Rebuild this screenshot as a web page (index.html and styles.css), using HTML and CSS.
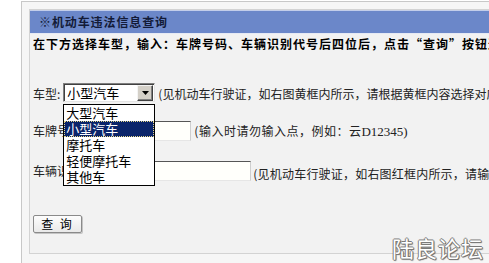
FILE: index.html
```html
<!DOCTYPE html>
<html lang="zh-CN">
<head>
<meta charset="utf-8">
<title>机动车违法信息查询</title>
<link rel="stylesheet" href="styles.css">
</head>
<body>
<div class="outer">
  <div class="panel">
    <div class="panel-title">※机动车违法信息查询</div>
    <p class="intro">在下方选择车型，输入：车牌号码、车辆识别代号后四位后，点击“查询”按钮进行查询。</p>
    <div class="form">
      <div class="row row-type">
        <span class="label">车型:</span>
        <div class="select">
          <span class="select-value">小型汽车</span>
          <span class="select-btn"><svg width="7" height="4" viewBox="0 0 7 4"><path d="M0 0H7L3.5 4Z" fill="#000"/></svg></span>
          <ul class="select-list">
            <li>大型汽车</li>
            <li class="active">小型汽车</li>
            <li>摩托车</li>
            <li>轻便摩托车</li>
            <li>其他车</li>
          </ul>
        </div>
        <span class="hint hint-type">(见机动车行驶证，如右图黄框内所示，请根据黄框内容选择对应车型)</span>
      </div>
      <div class="row row-plate">
        <span class="label">车牌号码:</span>
        <span class="text-input input-plate"></span>
        <span class="hint">(输入时请勿输入点，例如：云<span class="latin">D12345)</span></span>
      </div>
      <div class="row row-vin">
        <span class="label">车辆识别代号:</span>
        <span class="text-input input-vin"></span>
        <span class="hint hint-vin">(见机动车行驶证，如右图红框内所示，请输入车辆识别代号后四位)</span>
      </div>
    </div>
    <button class="submit" type="button">查 询</button>
  </div>
</div>
<div class="watermark">陆良论坛</div>
</body>
</html>
```

FILE: styles.css
```css
html, body {
  margin: 0;
  padding: 0;
}
body {
  width: 489px;
  height: 263px;
  overflow: hidden;
  position: relative;
  background: #ffffff;
  font-family: "Noto Sans CJK SC", "Liberation Sans", sans-serif;
  font-size: 12px;
  color: #222;
}
.outer {
  margin: 1px 0 0 21px;
  border-top: 1px solid #c8c8c8;
  border-left: 1px solid #c8c8c8;
  padding: 7px 0 0 7px;
  height: 254px;
  overflow: hidden;
  background: #f6f6f6;
}
.panel {
  width: 540px;
  border: 1px solid #d3d3d3;
  border-right: none;
  background: #f2f2f2;
  padding-bottom: 20px;
}
.panel-title {
  height: 22px;
  line-height: 22px;
  border-top: 1px solid #c2cdea;
  border-bottom: 1px solid #e6eaf4;
  background: #6b87c9;
  padding-left: 9px;
  font-weight: bold;
  color: #131b38;
  letter-spacing: 0.9px;
  white-space: nowrap;
}
.intro {
  margin: 0;
  padding-left: 3px;
  line-height: 20px;
  font-weight: bold;
  color: #000;
  letter-spacing: 1px;
  white-space: nowrap;
}
.form {
  margin-top: 29px;
  padding-left: 3px;
}
.row {
  display: flex;
  align-items: center;
  white-space: nowrap;
}
.row-type {
  height: 19px;
}
.row-plate {
  margin-top: 19px;
  height: 20px;
}
.row-vin {
  margin-top: 20px;
  height: 20px;
}
.label {
  margin-right: 3px;
  line-height: 16px;
  position: relative;
  top: 1px;
}
.row-plate .label, .row-vin .label {
  top: 0;
}
.select {
  position: relative;
  width: 92px;
  height: 19px;
  box-sizing: border-box;
  border: 1px solid;
  border-color: #7f7f7f #e4e4e4 #e4e4e4 #7f7f7f;
  box-shadow: inset 1px 1px 0 #404040;
  background: #fff;
  display: flex;
  align-items: center;
  flex: none;
}
.select-value {
  flex: 1;
  padding-left: 3px;
  font-size: 13px;
  line-height: 17px;
  color: #000;
}
.select-btn {
  width: 16px;
  height: 16px;
  margin-right: 1px;
  margin-top: 1px;
  box-sizing: border-box;
  background: #d4d0c8;
  border: 1px solid;
  border-color: #f4f4f4 #404040 #404040 #f4f4f4;
  box-shadow: inset -1px -1px 0 #808080;
  display: flex;
  align-items: center;
  justify-content: center;
}
.select-list {
  position: absolute;
  left: -1px;
  top: calc(100% + 3px);
  width: 92px;
  box-sizing: border-box;
  margin: 0;
  padding: 0;
  list-style: none;
  border: 1px solid #000;
  background: #fff;
  z-index: 5;
}
.select-list li {
  height: 16px;
  line-height: 16px;
  padding-left: 2px;
  font-size: 13px;
  color: #000;
}
.select-list li.active {
  background: #0a246a;
  color: #fff;
  outline: 1px dotted #e6d88a;
  outline-offset: -1px;
}
.hint {
  margin-left: 3px;
  color: #222;
  position: relative;
  top: 1px;
}
.hint-vin {
  margin-left: 2px;
  top: 2px;
  letter-spacing: 0.2px;
}
.row-plate .hint {
  top: 0;
  letter-spacing: 0.5px;
}
.latin {
  font-family: "Liberation Serif", serif;
  font-size: 13px;
  letter-spacing: 0;
}
.text-input {
  display: block;
  height: 20px;
  box-sizing: border-box;
  border: 1px solid;
  border-color: #555 #cfcfcf #e6e6e6 #6f6f6f;
  background: #fffffb;
  flex: none;
}
.input-plate {
  width: 104px;
}
.input-vin {
  width: 140px;
}
.submit {
  display: block;
  margin: 34px 0 0 3px;
  width: 49px;
  height: 18px;
  padding: 0;
  border: 1px solid #8a8a8a;
  border-radius: 2px;
  background: linear-gradient(#fdfdfd, #e9e9e9);
  box-shadow: 1px 1px 0 #c4c4c4;
  font-family: "Noto Sans CJK SC", sans-serif;
  font-size: 12px;
  line-height: 16px;
  letter-spacing: 2px;
  color: #000;
}
.watermark {
  position: absolute;
  right: 5px;
  bottom: 5px;
  font-family: "Noto Sans CJK SC", sans-serif;
  font-size: 22px;
  line-height: 22px;
  letter-spacing: 1px;
  color: #ffffff;
  text-shadow: 1px 0 0 #7a7a7a, -1px 0 0 #7a7a7a, 0 1px 0 #7a7a7a, 0 -1px 0 #7a7a7a, 1px 1px 1px #555;
}
```
